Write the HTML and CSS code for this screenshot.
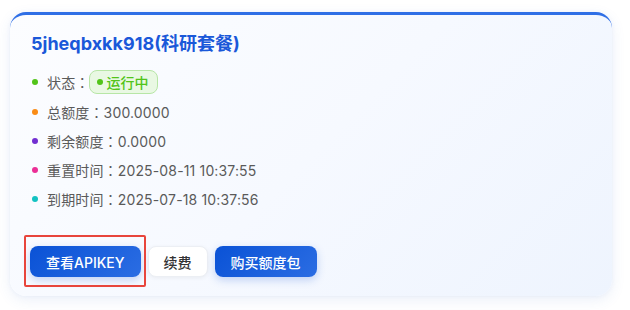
FILE: index.html
```html
<!DOCTYPE html>
<html lang="zh">
<head>
<meta charset="utf-8">
<link rel="stylesheet" href="styles.css">
</head>
<body>
<div class="page">
  <div class="card">
    <h2 class="title">5jheqbxkk918(科研套餐)</h2>
    <ul class="info">
      <li class="row"><span class="dot green"></span><span class="label">状态<span class="colon" lang="ja">：</span></span><span class="badge"><span class="badge-dot"></span>运行中</span></li>
      <li class="row"><span class="dot orange"></span><span class="label">总额度<span class="colon" lang="ja">：</span>300.0000</span></li>
      <li class="row"><span class="dot purple"></span><span class="label">剩余额度<span class="colon" lang="ja">：</span>0.0000</span></li>
      <li class="row"><span class="dot pink"></span><span class="label">重置时间<span class="colon" lang="ja">：</span>2025-08-11 10:37:55</span></li>
      <li class="row"><span class="dot cyan"></span><span class="label">到期时间<span class="colon" lang="ja">：</span>2025-07-18 10:37:56</span></li>
    </ul>
    <div class="actions">
      <div class="highlight">
        <button class="btn primary">查看APIKEY</button>
      </div>
      <button class="btn plain">续费</button>
      <button class="btn primary">购买额度包</button>
    </div>
  </div>
</div>
</body>
</html>
```

FILE: styles.css
```css
* { box-sizing: border-box; }
html, body { margin: 0; padding: 0; background: #ffffff; }
body {
  font-family: "Inter", "Noto Sans CJK SC", sans-serif;
  width: 630px;
  height: 310px;
  overflow: hidden;
}
.page {
  padding: 12px 18px 14px 10px;
}
.card {
  width: 602px;
  height: 284px;
  border-top: 3px solid #2f6fe6;
  border-radius: 16px;
  background: linear-gradient(135deg, #fcfdff 0%, #f6f9ff 50%, #eef4fe 100%);
  box-shadow: 0 4px 14px rgba(60, 110, 200, 0.10), 0 0 4px rgba(60, 110, 200, 0.06);
  padding: 16px 20px 0 21px;
  position: relative;
}
.title {
  margin: 0;
  font-size: 18px;
  line-height: 26px;
  font-weight: 700;
  color: #1a58d9;
}
.info {
  list-style: none;
  margin: 9px 0 0 0;
  padding: 0;
}
.row {
  display: flex;
  align-items: center;
  height: 29px;
  font-size: 14px;
  color: #5a5a5a;
}
.row:first-child { height: 31px; }
.label { letter-spacing: 0.15px; }
.colon {
  font-family: "Noto Sans CJK JP", sans-serif;
}
.dot {
  width: 6px;
  height: 6px;
  border-radius: 50%;
  margin: 0 9px 0 1px;
  flex: none;
}
.green { background: #52c41a; }
.orange { background: #fa8c16; }
.purple { background: #722ed1; }
.pink { background: #eb2f96; }
.cyan { background: #13c2c2; }
.badge {
  display: inline-flex;
  align-items: center;
  gap: 3px;
  height: 24px;
  padding: 0 9px 0 7px;
  border: 1px solid #b7e6a6;
  background: #e9f8e3;
  color: #52c41a;
  border-radius: 8px;
  font-size: 14px;
  font-weight: 500;
}
.badge-dot {
  width: 6px;
  height: 6px;
  border-radius: 50%;
  background: #52c41a;
}
.actions {
  display: flex;
  align-items: center;
  gap: 7px;
  margin: 33px 0 0 -1px;
}
.highlight {
  position: relative;
}
.highlight::after {
  content: "";
  position: absolute;
  left: -6px;
  top: -11px;
  right: -5px;
  bottom: -10px;
  border: 2px solid #e8453c;
  border-radius: 2px;
}
.btn {
  font-family: "Inter", "Noto Sans CJK SC", sans-serif;
  font-size: 14px;
  font-weight: 500;
  height: 31px;
  border-radius: 8px;
  padding: 0 16px;
  cursor: pointer;
  display: block;
}
.primary {
  border: none;
  color: #ffffff;
  background: linear-gradient(135deg, #0a52d6 0%, #2b6de3 100%);
  box-shadow: 0 3px 8px rgba(30, 90, 210, 0.25);
}
.plain {
  border: 1px solid #eceff4;
  background: #ffffff;
  color: #333333;
  padding: 0 15px;
  box-shadow: 0 1px 4px rgba(0, 0, 0, 0.06);
}
```
